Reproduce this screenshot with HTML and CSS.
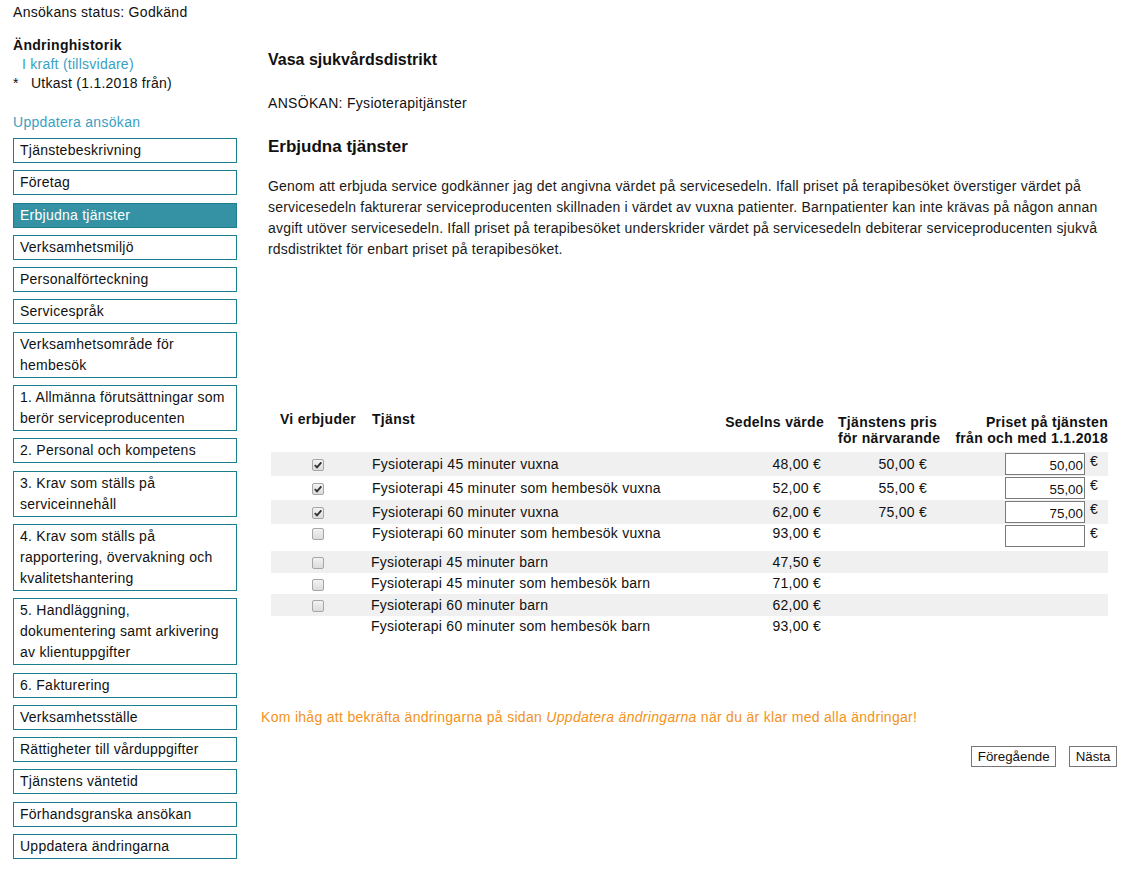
FILE: index.html
```html
<!DOCTYPE html>
<html lang="sv">
<head>
<meta charset="utf-8">
<title>Erbjudna tjänster</title>
<link rel="stylesheet" href="styles.css">
</head>
<body>
<div class="page">
  <p class="status">Ansökans status: Godkänd</p>
  <div class="layout">
    <aside class="sidebar">
      <h3 class="hist-title">Ändringhistorik</h3>
      <ul class="hist">
        <li class="hist-item"><a class="hist-link">I kraft (tillsvidare)</a></li>
        <li class="hist-item"><span class="star">*</span>Utkast (1.1.2018 från)</li>
      </ul>
      <a class="update-link">Uppdatera ansökan</a>
      <nav class="menu">
        <a class="menu-item">Tjänstebeskrivning</a>
        <a class="menu-item">Företag</a>
        <a class="menu-item active">Erbjudna tjänster</a>
        <a class="menu-item">Verksamhetsmiljö</a>
        <a class="menu-item">Personalförteckning</a>
        <a class="menu-item">Servicespråk</a>
        <a class="menu-item">Verksamhetsområde för<br>hembesök</a>
        <a class="menu-item">1. Allmänna förutsättningar som<br>berör serviceproducenten</a>
        <a class="menu-item">2. Personal och kompetens</a>
        <a class="menu-item">3. Krav som ställs på<br>serviceinnehåll</a>
        <a class="menu-item">4. Krav som ställs på<br>rapportering, övervakning och<br>kvalitetshantering</a>
        <a class="menu-item">5. Handläggning,<br>dokumentering samt arkivering<br>av klientuppgifter</a>
        <a class="menu-item">6. Fakturering</a>
        <a class="menu-item">Verksamhetsställe</a>
        <a class="menu-item">Rättigheter till vårduppgifter</a>
        <a class="menu-item">Tjänstens väntetid</a>
        <a class="menu-item">Förhandsgranska ansökan</a>
        <a class="menu-item">Uppdatera ändringarna</a>
      </nav>
    </aside>
    <main class="main">
      <h2 class="org">Vasa sjukvårdsdistrikt</h2>
      <p class="app">ANSÖKAN: Fysioterapitjänster</p>
      <h2 class="section">Erbjudna tjänster</h2>
      <p class="intro">Genom att erbjuda service godkänner jag det angivna värdet på servicesedeln. Ifall priset på terapibesöket överstiger värdet på<br>servicesedeln fakturerar serviceproducenten skillnaden i värdet av vuxna patienter. Barnpatienter kan inte krävas på någon annan<br>avgift utöver servicesedeln. Ifall priset på terapibesöket underskrider värdet på servicesedeln debiterar serviceproducenten sjukvå<br>rdsdistriktet för enbart priset på terapibesöket.</p>

      <table class="services">
        <colgroup>
          <col class="c-offer">
          <col class="c-name">
          <col class="c-voucher">
          <col class="c-price">
          <col class="c-new">
        </colgroup>
        <thead>
          <tr>
            <th class="th-offer">Vi erbjuder</th>
            <th class="th-name">Tjänst</th>
            <th class="th-voucher">Sedelns värde</th>
            <th class="th-price">Tjänstens pris<br>för närvarande</th>
            <th class="th-new">Priset på tjänsten<br>från och med 1.1.2018</th>
          </tr>
        </thead>
        <tbody>
          <tr class="row tall shade">
            <td class="td-offer"><span class="cb"><svg viewBox="0 0 12 12" width="12" height="12"><path d="M2.8 6.2 L5 8.4 L9.3 3.4" fill="none" stroke="#333" stroke-width="1.9"/></svg></span></td>
            <td class="td-name">Fysioterapi 45 minuter vuxna</td>
            <td class="td-voucher">48,00 €</td>
            <td class="td-price">50,00 €</td>
            <td class="td-new"><input class="price-input" type="text" value="50,00"><span class="euro">€</span></td>
          </tr>
          <tr class="row tall">
            <td class="td-offer"><span class="cb"><svg viewBox="0 0 12 12" width="12" height="12"><path d="M2.8 6.2 L5 8.4 L9.3 3.4" fill="none" stroke="#333" stroke-width="1.9"/></svg></span></td>
            <td class="td-name">Fysioterapi 45 minuter som hembesök vuxna</td>
            <td class="td-voucher">52,00 €</td>
            <td class="td-price">55,00 €</td>
            <td class="td-new"><input class="price-input" type="text" value="55,00"><span class="euro">€</span></td>
          </tr>
          <tr class="row tall shade">
            <td class="td-offer"><span class="cb"><svg viewBox="0 0 12 12" width="12" height="12"><path d="M2.8 6.2 L5 8.4 L9.3 3.4" fill="none" stroke="#333" stroke-width="1.9"/></svg></span></td>
            <td class="td-name">Fysioterapi 60 minuter vuxna</td>
            <td class="td-voucher">62,00 €</td>
            <td class="td-price">75,00 €</td>
            <td class="td-new"><input class="price-input" type="text" value="75,00"><span class="euro">€</span></td>
          </tr>
          <tr class="row taller">
            <td class="td-offer"><span class="cb"></span></td>
            <td class="td-name">Fysioterapi 60 minuter som hembesök vuxna</td>
            <td class="td-voucher">93,00 €</td>
            <td class="td-price"></td>
            <td class="td-new"><input class="price-input" type="text" value=""><span class="euro">€</span></td>
          </tr>
          <tr class="row short shade">
            <td class="td-offer"><span class="cb"></span></td>
            <td class="td-name shift">Fysioterapi 45 minuter barn</td>
            <td class="td-voucher">47,50 €</td>
            <td class="td-price"></td>
            <td class="td-new"></td>
          </tr>
          <tr class="row short">
            <td class="td-offer"><span class="cb"></span></td>
            <td class="td-name shift">Fysioterapi 45 minuter som hembesök barn</td>
            <td class="td-voucher">71,00 €</td>
            <td class="td-price"></td>
            <td class="td-new"></td>
          </tr>
          <tr class="row short shade">
            <td class="td-offer"><span class="cb"></span></td>
            <td class="td-name shift">Fysioterapi 60 minuter barn</td>
            <td class="td-voucher">62,00 €</td>
            <td class="td-price"></td>
            <td class="td-new"></td>
          </tr>
          <tr class="row short">
            <td class="td-offer"></td>
            <td class="td-name shift">Fysioterapi 60 minuter som hembesök barn</td>
            <td class="td-voucher">93,00 €</td>
            <td class="td-price"></td>
            <td class="td-new"></td>
          </tr>
        </tbody>
      </table>

      <p class="notice">Kom ihåg att bekräfta ändringarna på sidan <em>Uppdatera ändringarna</em> när du är klar med alla ändringar!</p>

      <div class="nav-buttons">
        <button class="btn" type="button">Föregående</button>
        <button class="btn" type="button">Nästa</button>
      </div>
    </main>
  </div>
</div>
</body>
</html>
```

FILE: styles.css
```css
html, body {
  margin: 0;
  padding: 0;
  background: #ffffff;
}

body {
  font-family: "Liberation Sans", Arial, sans-serif;
  font-size: 14px;
  color: #111111;
  letter-spacing: 0.25px;
}

.page {
  padding: 4px 0 0 13px;
}

.status {
  margin: 0;
  line-height: 16px;
  letter-spacing: 0.3px;
}

.layout {
  display: flex;
  align-items: flex-start;
}

/* ---------- sidebar ---------- */
.sidebar {
  flex: none;
  width: 224px;
  padding-top: 16px;
}

.hist-title {
  margin: 0;
  font-size: 14px;
  font-weight: bold;
  line-height: 19px;
  letter-spacing: 0.3px;
}

.hist {
  list-style: none;
  margin: 0;
  padding: 0;
  line-height: 19px;
}

.hist-link {
  color: #3a9fc4;
  padding-left: 9px;
}

.star {
  display: inline-block;
  width: 18px;
}

.update-link {
  display: block;
  margin: 20px 0 6px;
  line-height: 19px;
  color: #3a9fc4;
  letter-spacing: 0.3px;
}

.menu {
  display: flex;
  flex-direction: column;
  gap: 7.3px;
}

.menu-item {
  display: block;
  border: 1px solid #1b7f8e;
  padding: 1px 0 1px 6px;
  line-height: 21px;
  color: #111111;
  text-decoration: none;
  white-space: nowrap;
}

.menu-item.active {
  background: #3592a4;
  color: #ffffff;
}

/* ---------- main ---------- */
.main {
  flex: none;
  width: 849px;
  margin-left: 31px;
  padding-top: 30px;
}

.org {
  margin: 0;
  font-size: 16px;
  line-height: 20px;
  font-weight: bold;
  letter-spacing: 0;
}

.app {
  margin: 25px 0 0;
  line-height: 16px;
  letter-spacing: 0.3px;
}

.section {
  margin: 26px 0 0;
  font-size: 17px;
  line-height: 20px;
  font-weight: bold;
  letter-spacing: 0;
}

.intro {
  margin: 19px 0 0;
  line-height: 21px;
  white-space: nowrap;
  color: #1a1a1a;
  letter-spacing: 0.2px;
}

/* ---------- table ---------- */
.services {
  margin: 148px 0 0 3px;
  width: 837px;
  border-collapse: collapse;
  table-layout: fixed;
}

.c-offer { width: 94px; }
.c-name { width: 335px; }
.c-voucher { width: 126px; }
.c-price { width: 124px; }
.c-new { width: 158px; }

.services th {
  font-weight: bold;
  line-height: 16px;
  padding: 6px 0;
  vertical-align: top;
  white-space: nowrap;
  letter-spacing: 0.3px;
}

.th-offer {
  text-align: center;
  padding-top: 3px !important;
}

.th-name {
  text-align: left;
  padding-left: 7px !important;
  padding-top: 3px !important;
}

.th-voucher {
  text-align: right;
  padding-right: 2px !important;
}

.th-price {
  text-align: left;
  padding-left: 12px !important;
}

.th-new {
  text-align: right;
}

.services td {
  padding: 0;
  vertical-align: middle;
  white-space: nowrap;
  line-height: 16px;
}

.row.shade { background: #f0f0f0; }
.row.tall { height: 24px; }
.row.short { height: 21.5px; }

.row.taller { height: 27px; }
.row.taller td {
  vertical-align: top;
  padding-top: 1px;
}

.td-offer {
  text-align: center;
}

.td-name {
  padding-left: 7px !important;
}

.td-name.shift {
  padding-left: 6px !important;
}

.td-voucher {
  text-align: right;
  padding-right: 5px !important;
}

.td-price {
  text-align: right;
  padding-right: 23px !important;
}

.td-new {
  text-align: right;
  padding-right: 10px !important;
}

.cb {
  display: inline-block;
  width: 12px;
  height: 12px;
  box-sizing: border-box;
  border: 1px solid #a6a6a6;
  border-radius: 2px;
  background: linear-gradient(#f2f2f2, #dcdcdc);
  vertical-align: middle;
  position: relative;
}

.cb svg {
  position: absolute;
  left: -1px;
  top: -1px;
}

.price-input {
  box-sizing: border-box;
  width: 80px;
  height: 22px;
  border: 1px solid #7a7a7a;
  padding: 3px 1px 0 2px;
  font-family: "Liberation Sans", Arial, sans-serif;
  font-size: 13.33px;
  text-align: right;
  color: #111111;
  background: #ffffff;
  vertical-align: middle;
  margin: 0;
}

.euro {
  display: inline-block;
  margin-left: 5px;
  vertical-align: top;
  line-height: 16px;
}

/* ---------- footer ---------- */
.notice {
  margin: 72px 0 0 -7px;
  line-height: 16px;
  color: #f39220;
  letter-spacing: 0.3px;
}

.notice em {
  font-style: italic;
}

.nav-buttons {
  display: flex;
  justify-content: flex-end;
  gap: 13px;
  margin-top: 21px;
}

.btn {
  box-sizing: border-box;
  height: 21px;
  padding: 0 5.5px;
  border: 1px solid #767676;
  background: #ffffff;
  color: #111111;
  font-family: "Liberation Sans", Arial, sans-serif;
  font-size: 13.33px;
  line-height: 19px;
  border-radius: 0;
  letter-spacing: 0;
}
```
